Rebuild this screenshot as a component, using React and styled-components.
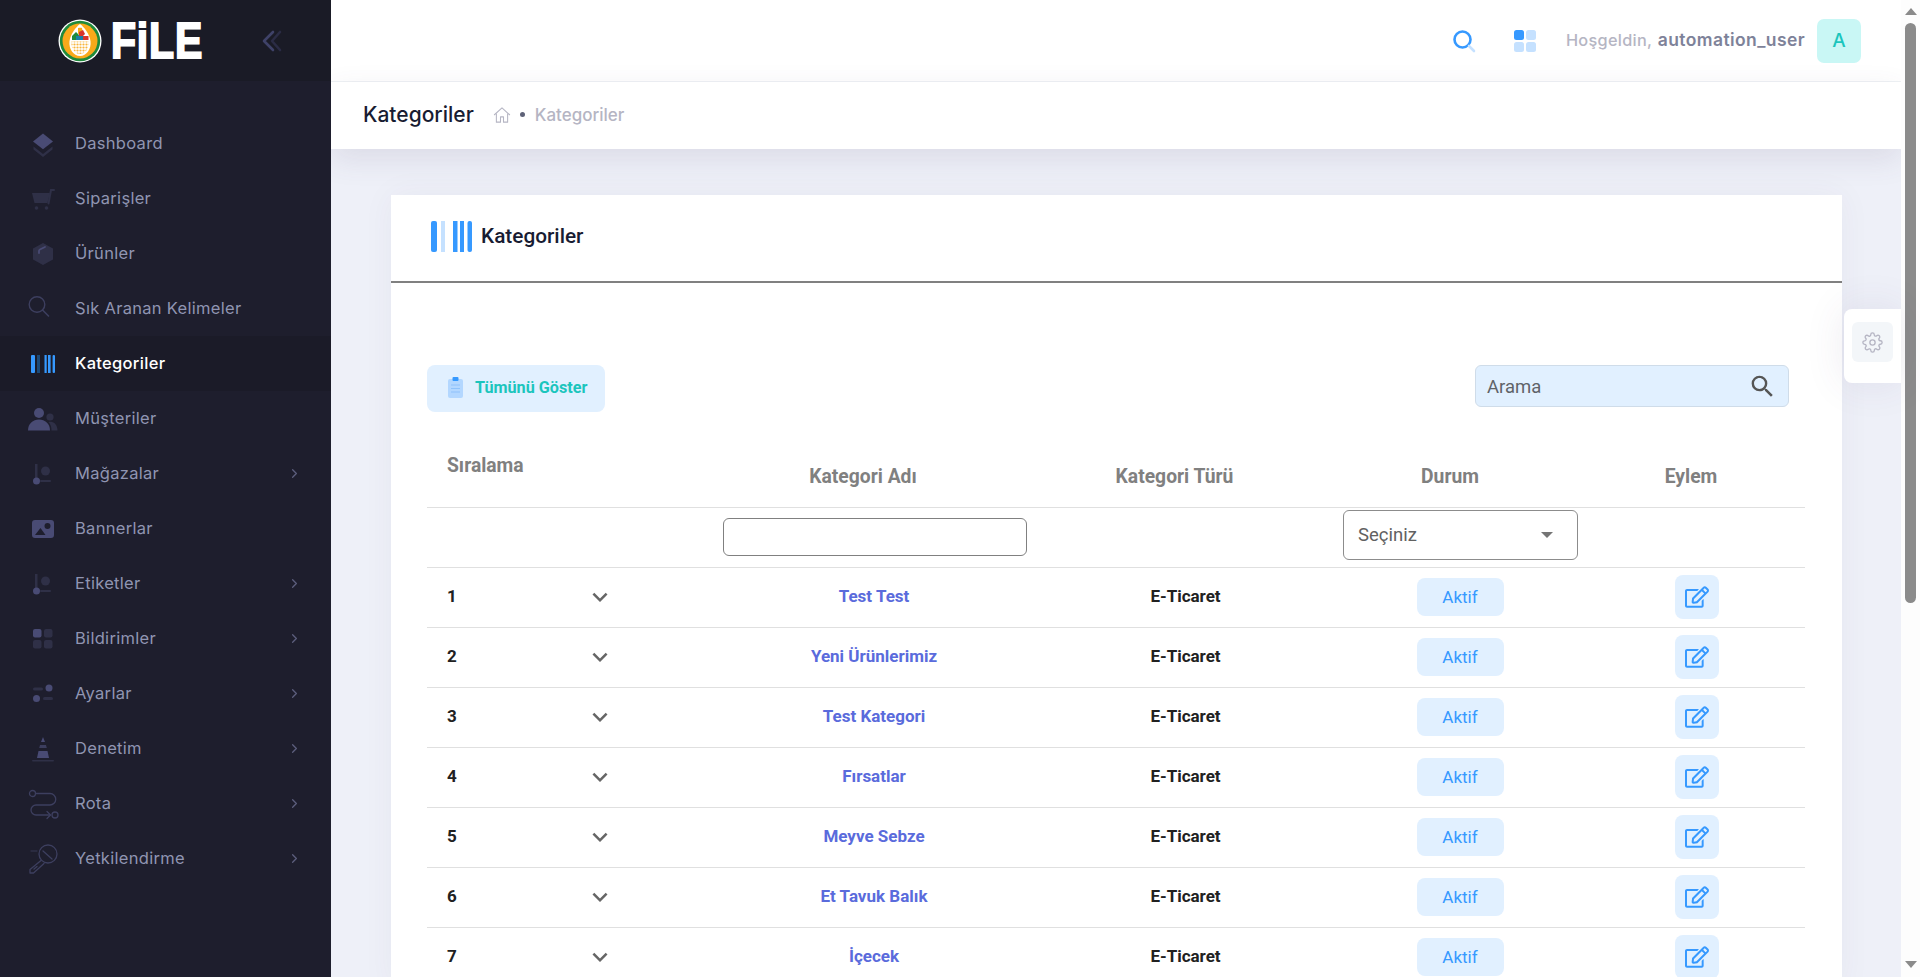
import React from 'react';
import styled, { createGlobalStyle } from 'styled-components';
import { FaRegEdit } from 'react-icons/fa';
import { MdExpandMore, MdSearch } from 'react-icons/md';
import { FiChevronRight, FiSettings } from 'react-icons/fi';

const GlobalStyle = createGlobalStyle`
  html, body { margin: 0; padding: 0; height: 100%; overflow: hidden; }
  * { box-sizing: border-box; }
  body { font-family: Roboto, "Liberation Sans", sans-serif; background: #eef0f8; }
`;

const DISPLAY_FONT = 'Inter, "Noto Sans", sans-serif';
const FULL = '#494b74';
const DIM = '#2f3047';

const Page = styled.div`
  position: relative;
  display: flex;
  height: 100vh;
  overflow: hidden;
`;

const Sidebar = styled.aside`
  flex: 0 0 331px;
  background: #1e1e2d;
  font-family: ${DISPLAY_FONT};
`;

const Brand = styled.div`
  height: 81px;
  background: #1a1b26;
  display: flex;
  align-items: center;
  padding: 0 48px 0 58px;
`;

const LogoText = styled.span`
  display: inline-block;
  margin-left: 9px;
  width: 110px;
  font-family: "Liberation Sans", sans-serif;
  font-weight: 700;
  font-size: 50px;
  line-height: 1;
  color: #fff;
  letter-spacing: 1px;
  -webkit-text-stroke: 2px #fff;
  transform: scaleX(0.82);
  transform-origin: left center;
`;

const Collapse = styled.button`
  margin-left: auto;
  padding: 0;
  border: 0;
  background: none;
  display: flex;
`;

const Menu = styled.nav`
  padding-top: 35px;
`;

const MenuRow = styled.div`
  height: 55px;
  display: flex;
  align-items: center;
  padding: 0 29px 0 28px;
  background: ${(p) => (p.$active ? '#1b1b28' : 'transparent')};
  color: ${(p) => (p.$active ? '#ffffff' : '#9095b2')};
  font-size: 16.5px;
  font-weight: ${(p) => (p.$active ? 500 : 400)};
  letter-spacing: 0.3px;
  svg.arrow { margin-left: auto; color: #5d5f7e; }
`;

const MenuLabel = styled.span`
  padding-bottom: 2px;
`;

const IconSlot = styled.span`
  width: 30px;
  height: 30px;
  margin-right: 17px;
  display: flex;
  align-items: center;
  justify-content: center;
  flex: none;
`;

const Main = styled.main`
  flex: 1;
  min-width: 0;
  display: flex;
  flex-direction: column;
  overflow: hidden;
`;

const TopBar = styled.header`
  flex: 0 0 82px;
  background: #fff;
  border-bottom: 1px solid #eff2f5;
  display: flex;
  align-items: center;
  justify-content: flex-end;
  padding: 0 40px 0 0;
  font-family: ${DISPLAY_FONT};
`;

const TopIcon = styled.span`
  display: flex;
  margin-right: ${(p) => p.$gap}px;
`;

const Welcome = styled.span`
  font-size: 16.3px;
  font-weight: 500;
  color: #b5b5c3;
  letter-spacing: 0.3px;
  margin-right: 12px;
  padding-bottom: 3px;
  b { color: #7e8299; font-size: 17.5px; font-weight: 600; margin-left: 1px; letter-spacing: 0.4px; }
`;

const Avatar = styled.span`
  width: 44px;
  height: 44px;
  border-radius: 7px;
  background: #c9f7f5;
  color: #1bc5bd;
  font-size: 19px;
  font-weight: 500;
  display: flex;
  align-items: center;
  justify-content: center;
`;

const SubHeader = styled.div`
  position: relative;
  flex: 0 0 67px;
  background: #fff;
  display: flex;
  align-items: center;
  padding: 0 0 2px 32px;
  box-shadow: 0 10px 30px rgba(82, 63, 105, 0.12);
  font-family: ${DISPLAY_FONT};
`;

const PageTitle = styled.h1`
  margin: 0 19px 0 0;
  font-size: 21px;
  font-weight: 500;
  color: #181c32;
`;

const Crumb = styled.span`
  font-size: 17px;
  font-weight: 500;
  color: #b5b5c3;
`;

const Dot = styled.span`
  width: 5px;
  height: 5px;
  border-radius: 50%;
  background: #5e6278;
  margin: 0 10px 0 9px;
`;

const Content = styled.div`
  flex: 1;
  padding: 46px 59px 0 60px;
`;

const Card = styled.section`
  background: #fff;
  box-shadow: 0 0 30px rgba(82, 63, 105, 0.05);
`;

const CardHead = styled.div`
  height: 88px;
  border-bottom: 2px solid #808080;
  display: flex;
  align-items: center;
  padding: 0 0 4px 40px;
  gap: 9px;
`;

const CardTitle = styled.h2`
  margin: 0;
  font-size: 20.8px;
  font-weight: 500;
  color: #181c32;
`;

const CardBody = styled.div`
  padding: 82px 37px 0 36px;
`;

const Toolbar = styled.div`
  display: flex;
  justify-content: space-between;
  align-items: flex-start;
  padding-right: 16px;
`;

const ShowAll = styled.button`
  width: 178px;
  height: 47px;
  border: 0;
  border-radius: 8px;
  background: #e1f0ff;
  color: #1bc5bd;
  font-family: Roboto, sans-serif;
  font-size: 16.2px;
  font-weight: 700;
  display: flex;
  align-items: center;
  gap: 12px;
  padding: 0 0 2px 21px;
`;

const SearchBox = styled.label`
  width: 314px;
  height: 42px;
  border: 1px solid #cfdce9;
  border-radius: 6px;
  background: #e1f0ff;
  color: #5f6368;
  font-size: 18.5px;
  display: flex;
  align-items: center;
  justify-content: space-between;
  padding: 1px 11px 0 11px;
`;

const COLUMNS = '153px 40px 88px 332px 291px 258px 216px';
const HEAD_COLUMNS = '281px 332px 291px 258px 216px';

const HeadRow = styled.div`
  display: grid;
  grid-template-columns: ${HEAD_COLUMNS};
  align-items: end;
  height: 96px;
  border-bottom: 1px solid #e0e0e0;
  color: #808080;
  font-size: 19.3px;
  font-weight: 700;
`;

const HeadCell = styled.div`
  text-align: ${(p) => (p.$left ? 'left' : 'center')};
  padding: ${(p) => (p.$left ? '0 0 31px 20px' : `0 ${p.$pr || 22}px 20px 0`)};
  line-height: 21px;
`;

const FilterRow = styled.div`
  display: grid;
  grid-template-columns: ${HEAD_COLUMNS};
  align-items: center;
  height: 60px;
  border-bottom: 1px solid #e0e0e0;
`;

const FilterInput = styled.input`
  display: block;
  width: 304px;
  height: 38px;
  margin: 0 auto 1px 15px;
  border: 1px solid #808080;
  border-radius: 6px;
  background: #fff;
`;

const SelectBox = styled.div`
  width: 235px;
  height: 50px;
  margin: 0 auto 5px 12px;
  border: 1px solid #8c8c8c;
  border-radius: 6px;
  color: #616161;
  font-size: 18.5px;
  display: flex;
  align-items: center;
  justify-content: space-between;
  padding: 0 24px 0 14px;
`;

const Caret = styled.span`
  width: 0;
  height: 0;
  border-left: 6px solid transparent;
  border-right: 6px solid transparent;
  border-top: 6px solid #757575;
`;

const Row = styled.div`
  display: grid;
  grid-template-columns: ${COLUMNS};
  align-items: center;
  height: 60px;
  padding-bottom: 2px;
  border-bottom: 1px solid #e0e0e0;
  font-size: 17px;
  font-weight: 700;
  color: #212121;
`;

const Order = styled.div`
  padding: 0 0 2px 20px;
`;

const Toggle = styled.div`
  display: flex;
  justify-content: center;
  color: #666;
`;

const CategoryName = styled.div`
  padding-bottom: 2px;
  text-align: center;
  color: #5a6bdc;
`;

const CategoryType = styled.div`
  padding-bottom: 2px;
  text-align: center;
`;

const StatusWrap = styled.div`
  display: flex;
  justify-content: center;
`;

const Status = styled.span`
  width: 87px;
  height: 38px;
  border-radius: 8px;
  background: #e1f0ff;
  color: #3699ff;
  font-size: 17px;
  font-weight: 400;
  display: flex;
  align-items: center;
  justify-content: center;
`;

const ActionWrap = styled.div`
  display: flex;
  justify-content: flex-start;
  padding-left: 86px;
`;

const EditButton = styled.button`
  width: 44px;
  height: 44px;
  border: 0;
  padding: 0;
  border-radius: 8px;
  background: #e1f0ff;
  color: #3699ff;
  display: flex;
  align-items: center;
  justify-content: center;
`;

const SettingsTab = styled.div`
  position: absolute;
  top: 309px;
  right: 19px;
  width: 57px;
  height: 74px;
  background: #fff;
  border-radius: 8px 0 0 8px;
  box-shadow: 0 0 40px rgba(82, 63, 105, 0.1);
  padding: 13px 0 0 8px;
`;

const SettingsButton = styled.span`
  width: 41px;
  height: 40px;
  border-radius: 6px;
  background: #f3f6f9;
  color: #b5b5c3;
  display: flex;
  align-items: center;
  justify-content: center;
`;

const ScrollRail = styled.div`
  flex: 0 0 19px;
  background: #fdfdfd;
  display: flex;
  flex-direction: column;
  align-items: center;
  padding: 8px 0 9px;
`;

const ScrollArrow = styled.span`
  width: 0;
  height: 0;
  border-left: 6px solid transparent;
  border-right: 6px solid transparent;
  ${(p) => (p.$down ? 'border-top: 7px solid #8b8b8b; margin-top: auto;' : 'border-bottom: 7px solid #8b8b8b;')}
`;

const ScrollThumb = styled.span`
  width: 11px;
  height: 580px;
  margin-top: 8px;
  border-radius: 6px;
  background: #8b8b8b;
`;

const Logo = () => (
  <svg width="44" height="44" viewBox="0 0 44 44" style={{ flex: 'none' }}>
    <defs>
      <pattern id="weave" width="3" height="3" patternUnits="userSpaceOnUse">
        <rect width="3" height="3" fill="#fff" />
        <circle cx="1.500" cy="1.500" r="1.100" fill="#f9b53c" />
      </pattern>
    </defs>
    <circle cx="22" cy="22" r="21.500" fill="#fff" />
    <circle cx="22" cy="22" r="20.200" fill="#1f8a3b" />
    <circle cx="22" cy="22" r="17.500" fill="#f9a91a" />
    <path d="M22 5c4 3 9.500 10 10.500 17 1 8-4 15-10.500 15s-11.500-7-10.500-15C12.500 15 18 8 22 5z" fill="#fff" />
    <path d="M13.500 22.500h17c.8 6-3 12.500-8.500 12.500s-9.300-6.500-8.500-12.500z" fill="url(#weave)" />
    <path d="M20 9c1.500-.5 3-.5 4 0l1 5-5 1z" fill="#f9a91a" />
    <path d="M14 17l4-4 3 3-1 5h-6z" fill="#1f8a3b" />
    <path d="M21 13l4-2 2 4-3 3-3-1z" fill="#d9352b" />
    <path d="M25 17h5.500v4H25z" fill="#d9352b" />
    <path d="M18 17h7v4h-7z" fill="#1a7fa8" />
  </svg>
);

const DoubleChevron = () => (
  <svg width="22" height="22" viewBox="0 0 22 22" fill="none" strokeWidth="2.600" strokeLinecap="round" strokeLinejoin="round">
    <path d="M19 2 11 11l8 9" stroke="#2b2c45" />
    <path d="M12 2 3 11l9 9" stroke="#3f4268" />
  </svg>
);

const Duo = ({ w = 24, h = 24, box, children }) => (
  <svg width={w} height={h} viewBox={box || `0 0 ${w} ${h}`} overflow="visible">{children}</svg>
);

const menuIcons = {
  layers: (
    <Duo>
      <path d="M12 1.500 22 9.500l-10 7.700L2 9.500z" fill={FULL} />
      <path d="M2.500 14.500 12 22l9.500-7.500v3L12 25l-9.500-7.500z" fill={DIM} />
    </Duo>
  ),
  cart: (
    <Duo>
      <path d="M1 6h18l-2.500 10H3.500z" fill={DIM} />
      <path d="M17.500 16.500 20 3h3" stroke={DIM} strokeWidth="2" fill="none" strokeLinecap="round" />
      <circle cx="5.500" cy="21" r="1.800" fill={DIM} />
      <circle cx="15.500" cy="21" r="1.800" fill={DIM} />
    </Duo>
  ),
  box: (
    <Duo>
      <path d="M12 1 22 6.500v11L12 23 2 17.500v-11z" fill={DIM} />
      <path d="M8 11V9c0-.7.3-1.200.9-1.500L14 5" stroke={FULL} strokeWidth="1.800" fill="none" strokeLinecap="round" />
    </Duo>
  ),
  search: (
    <Duo box="3.500 2 24 24">
      <circle cx="9.500" cy="9.500" r="7.800" stroke="#3d3f5f" strokeWidth="1.400" fill="none" />
      <path d="m15 15 6 6" stroke="#3d3f5f" strokeWidth="1.600" strokeLinecap="round" />
    </Duo>
  ),
  barcode: (
    <Duo w={24} h={18}>
      <rect x="0" width="4" height="18" rx="1" fill="#3699ff" />
      <rect x="6" width="3" height="18" fill="#1c4a78" />
      <rect x="13.500" width="2.200" height="18" fill="#3699ff" />
      <rect x="17" width="2.600" height="18" fill="#3699ff" />
      <rect x="21.600" width="2.400" height="18" rx="1" fill="#3699ff" />
    </Duo>
  ),
  users: (
    <Duo w={30} h={24}>
      <circle cx="11" cy="6" r="5" fill={FULL} />
      <circle cx="22" cy="10" r="3.600" fill={DIM} />
      <path d="M0 23.500C0 16.500 5 12.500 11 12.500s11 4 11 11z" fill={FULL} />
      <path d="M23.500 23.500c0-3.500-1-6.500-3-8.500 1-.4 2-.4 3-.2 3.500.8 6 4 6 8.700z" fill={DIM} />
    </Duo>
  ),
  route: (
    <Duo>
      <path d="M4 2h2.500v14H4z" fill={DIM} />
      <circle cx="5.500" cy="19" r="3.500" fill={FULL} />
      <circle cx="14.500" cy="9" r="4.500" fill={DIM} />
      <rect x="9" y="18" width="11" height="2" rx="1" fill={DIM} />
    </Duo>
  ),
  image: (
    <Duo w={24} h={20}>
      <rect x="1" y="1" width="22" height="18" rx="3" fill={FULL} />
      <path d="M4 16 9.500 9l5 7z" fill="#1e1e2d" />
      <circle cx="16.500" cy="7" r="3" fill="#1e1e2d" />
    </Duo>
  ),
  apps: (
    <Duo w={22} h={22}>
      <rect x="1" y="1" width="8.500" height="8.500" rx="2" fill={FULL} />
      <rect x="12" y="1" width="8.500" height="8.500" rx="2" fill={DIM} />
      <rect x="1" y="12" width="8.500" height="8.500" rx="2" fill={DIM} />
      <rect x="12" y="12" width="8.500" height="8.500" rx="2" fill={DIM} />
    </Duo>
  ),
  toggles: (
    <Duo w={24} h={20}>
      <circle cx="18" cy="4" r="3.500" fill={FULL} />
      <rect x="2" y="3.500" width="10" height="3" rx="1.500" fill={DIM} />
      <circle cx="5.500" cy="14.500" r="3.500" fill={FULL} />
      <rect x="12" y="13" width="10" height="3" rx="1.500" fill={DIM} />
    </Duo>
  ),
  cone: (
    <Duo w={24} h={26}>
      <path d="M12 1 14 6h-4z" fill={FULL} />
      <path d="M9 9h6l.8 3H8.200z" fill={FULL} opacity="0.7" />
      <path d="M7.500 15h9l1.500 7H6z" fill={FULL} />
      <rect x="1" y="24" width="22" height="1.600" rx="0.800" fill={DIM} />
    </Duo>
  ),
  path: (
    <Duo w={30} h={30}>
      <g fill="none" stroke="#3d3f5f" strokeWidth="1.300" strokeLinecap="round" strokeLinejoin="round">
        <circle cx="4.500" cy="4.500" r="3" />
        <path d="M8 4.500h14a4.500 4.500 0 0 1 0 11.500H8a4.500 4.500 0 0 0 0 10h14" />
        <path d="m19 22.500 3.500 3.500-3.500 3.500" />
        <circle cx="27" cy="26" r="3" />
      </g>
    </Duo>
  ),
  key: (
    <Duo w={30} h={30}>
      <g fill="none" stroke="#3d3f5f" strokeWidth="1.300" strokeLinejoin="round" strokeLinecap="round">
        <circle cx="20" cy="10" r="9" />
        <path d="m15 7 9 8" />
        <path d="M13 16.500 2 25.500v3.500h3.500L16 19.500" />
        <path d="M6 25l3-2.500" />
        <path d="M3 7h6" stroke={DIM} />
      </g>
    </Duo>
  ),
};

const menu = [
  { label: 'Dashboard', icon: 'layers' },
  { label: 'Siparişler', icon: 'cart' },
  { label: 'Ürünler', icon: 'box' },
  { label: 'Sık Aranan Kelimeler', icon: 'search' },
  { label: 'Kategoriler', icon: 'barcode', active: true },
  { label: 'Müşteriler', icon: 'users' },
  { label: 'Mağazalar', icon: 'route', sub: true },
  { label: 'Bannerlar', icon: 'image' },
  { label: 'Etiketler', icon: 'route', sub: true },
  { label: 'Bildirimler', icon: 'apps', sub: true },
  { label: 'Ayarlar', icon: 'toggles', sub: true },
  { label: 'Denetim', icon: 'cone', sub: true },
  { label: 'Rota', icon: 'path', sub: true },
  { label: 'Yetkilendirme', icon: 'key', sub: true },
];

const categories = [
  'Test Test',
  'Yeni Ürünlerimiz',
  'Test Kategori',
  'Fırsatlar',
  'Meyve Sebze',
  'Et Tavuk Balık',
  'İçecek',
];

const App = () => (
  <Page>
    <GlobalStyle />
    <Sidebar>
      <Brand>
        <Logo />
        <LogoText>FiLE</LogoText>
        <Collapse aria-label="collapse"><DoubleChevron /></Collapse>
      </Brand>
      <Menu>
        {menu.map((item) => (
          <MenuRow key={item.label} $active={item.active}>
            <IconSlot>{menuIcons[item.icon]}</IconSlot>
            <MenuLabel>{item.label}</MenuLabel>
            {item.sub && <FiChevronRight className="arrow" size={15} />}
          </MenuRow>
        ))}
      </Menu>
    </Sidebar>

    <Main>
      <TopBar>
        <TopIcon $gap={37}>
          <svg width="24" height="24" viewBox="0 0 24 24" fill="none" strokeLinecap="round">
            <circle cx="10.500" cy="10.500" r="8" stroke="#3699ff" strokeWidth="2.600" />
            <path d="m17 17 5 5" stroke="#c5e1ff" strokeWidth="2.600" />
          </svg>
        </TopIcon>
        <TopIcon $gap={29}>
          <svg width="24" height="24" viewBox="0 0 24 24">
            <rect x="1" y="1" width="10" height="10" rx="2.500" fill="#3699ff" />
            <rect x="13" y="1" width="10" height="10" rx="2.500" fill="#c5e1ff" />
            <rect x="1" y="13" width="10" height="10" rx="2.500" fill="#c5e1ff" />
            <rect x="13" y="13" width="10" height="10" rx="2.500" fill="#c5e1ff" />
          </svg>
        </TopIcon>
        <Welcome>Hoşgeldin, <b>automation_user</b></Welcome>
        <Avatar>A</Avatar>
      </TopBar>

      <SubHeader>
        <PageTitle>Kategoriler</PageTitle>
        <svg width="18" height="18" viewBox="0 0 24 24" fill="none" stroke="#b5b5c3" strokeWidth="1.400" strokeLinejoin="round">
          <path d="M1.500 12 12 2.500 22.500 12" />
          <path d="M4.500 10v11.500h5.500v-7h4v7h5.500V10" />
        </svg>
        <Dot />
        <Crumb>Kategoriler</Crumb>
      </SubHeader>

      <Content>
        <Card>
          <CardHead>
            <svg width="41" height="31" viewBox="0 0 41 31">
              <rect x="0" width="6" height="31" rx="2" fill="#3699ff" />
              <rect x="10" width="4" height="31" fill="#c5e1ff" />
              <rect x="22" width="4.500" height="31" fill="#3699ff" />
              <rect x="29" width="4" height="31" fill="#3699ff" />
              <rect x="36.500" width="4.500" height="31" rx="2" fill="#3699ff" />
            </svg>
            <CardTitle>Kategoriler</CardTitle>
          </CardHead>
          <CardBody>
            <Toolbar>
              <ShowAll>
                <svg width="15" height="21" viewBox="0 0 15 21">
                  <rect x="0" y="2" width="15" height="19" rx="2" fill="#b3d7ff" />
                  <rect x="4.500" y="0" width="6" height="4" rx="1" fill="#3699ff" />
                  <path d="M3 8h9M3 11.500h9M3 15h9" stroke="#8fc2fb" strokeWidth="1.200" />
                </svg>
                Tümünü Göster
              </ShowAll>
              <SearchBox>
                Arama
                <MdSearch size={29} color="#555" />
              </SearchBox>
            </Toolbar>

            <HeadRow>
              <HeadCell $left>Sıralama</HeadCell>
              <HeadCell>Kategori Adı</HeadCell>
              <HeadCell>Kategori Türü</HeadCell>
              <HeadCell $pr={20}>Durum</HeadCell>
              <HeadCell $pr={12}>Eylem</HeadCell>
            </HeadRow>

            <FilterRow>
              <span />
              <FilterInput />
              <span />
              <SelectBox>Seçiniz<Caret /></SelectBox>
              <span />
            </FilterRow>

            {categories.map((name, i) => (
              <Row key={name}>
                <Order>{i + 1}</Order>
                <Toggle><MdExpandMore size={30} /></Toggle>
                <span />
                <CategoryName>{name}</CategoryName>
                <CategoryType>E-Ticaret</CategoryType>
                <StatusWrap><Status>Aktif</Status></StatusWrap>
                <ActionWrap>
                  <EditButton aria-label="edit"><FaRegEdit size={24} /></EditButton>
                </ActionWrap>
              </Row>
            ))}
          </CardBody>
        </Card>
      </Content>
    </Main>

    <ScrollRail>
      <ScrollArrow />
      <ScrollThumb />
      <ScrollArrow $down />
    </ScrollRail>

    <SettingsTab>
      <SettingsButton><FiSettings size={21} strokeWidth={1.5} /></SettingsButton>
    </SettingsTab>
  </Page>
);

export default App;
